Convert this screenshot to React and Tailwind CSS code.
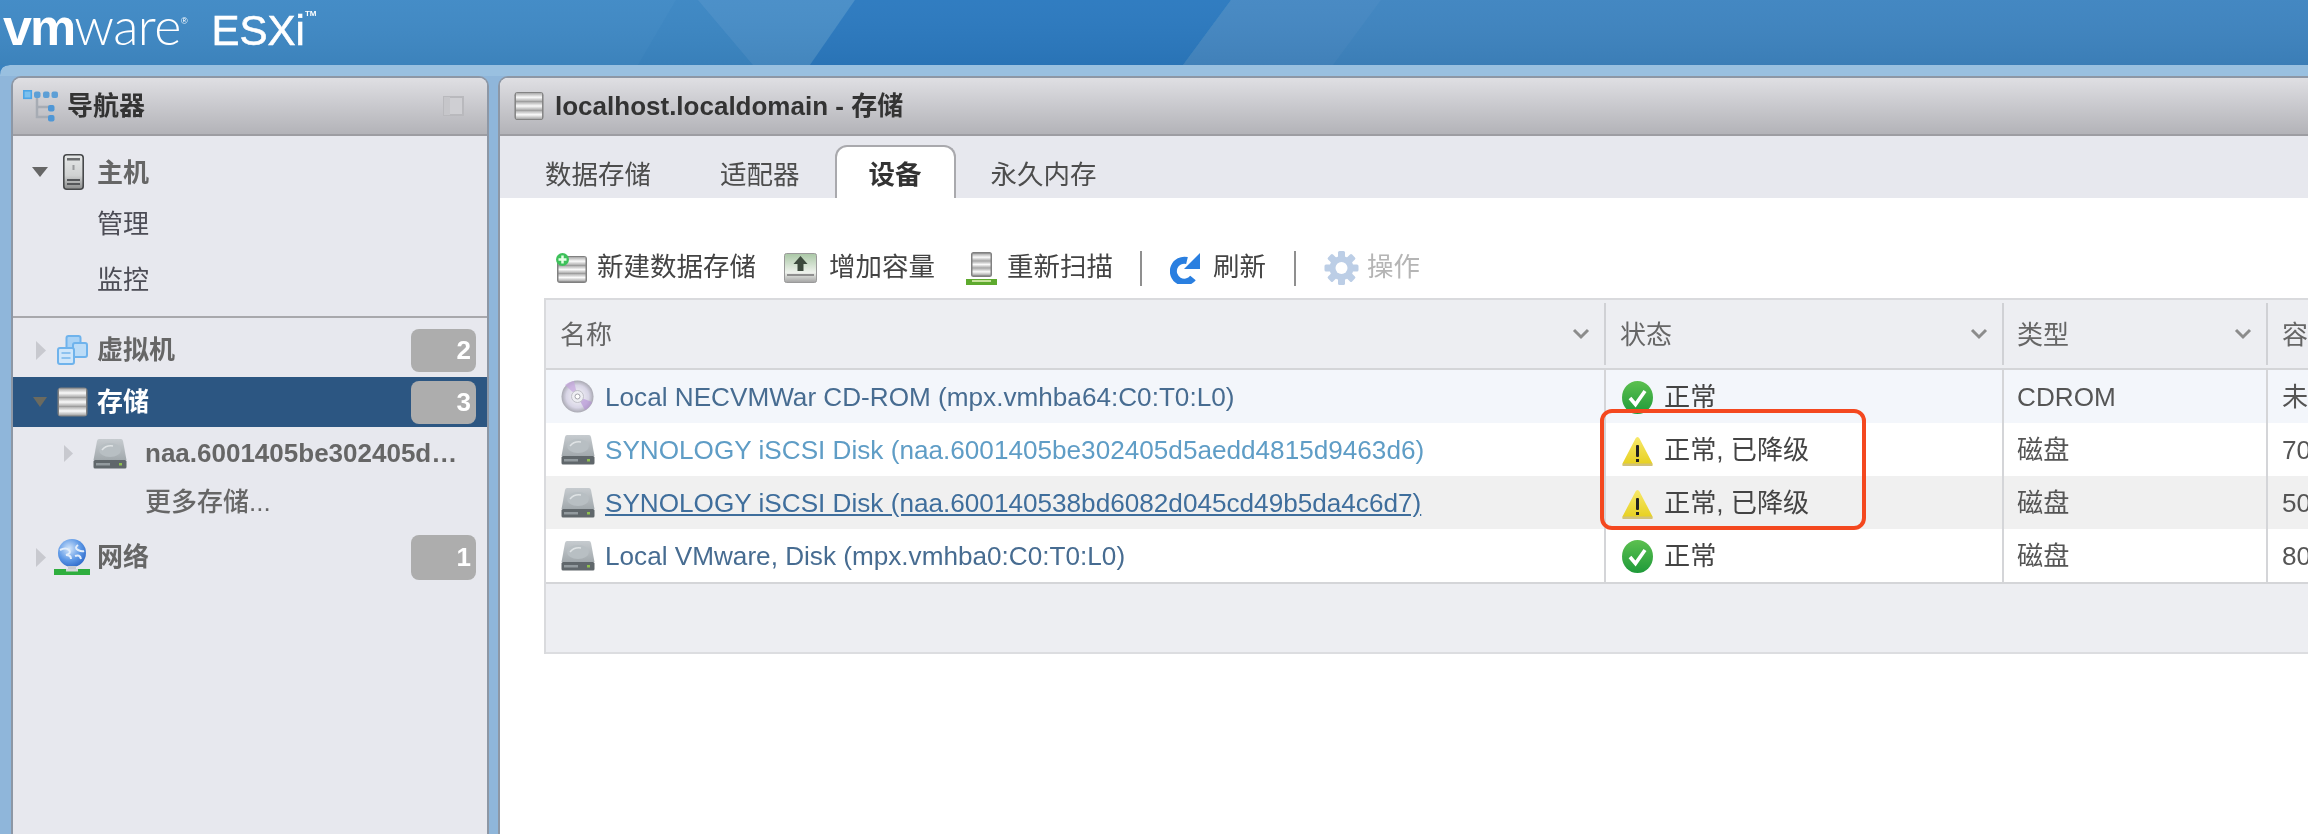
import React from "react";

const Defs = () => (
  <svg width="0" height="0" className="absolute">
    <defs>
      <linearGradient id="band" x1="0" y1="0" x2="0" y2="1">
        <stop offset="0" stopColor="#a8a8a8" />
        <stop offset="0.5" stopColor="#fafafa" />
        <stop offset="1" stopColor="#a4a4a4" />
      </linearGradient>
      <linearGradient id="diskTop" x1="0" y1="0" x2="0" y2="1">
        <stop offset="0" stopColor="#c6cbcf" />
        <stop offset="1" stopColor="#a2a9ad" />
      </linearGradient>
      <linearGradient id="warn" x1="0" y1="0" x2="0" y2="1">
        <stop offset="0" stopColor="#f7e86a" />
        <stop offset="1" stopColor="#e6cf1c" />
      </linearGradient>
      <linearGradient id="ok" x1="0" y1="0" x2="0" y2="1">
        <stop offset="0" stopColor="#5cc04f" />
        <stop offset="1" stopColor="#1f9a3a" />
      </linearGradient>
      <linearGradient id="host" x1="0" y1="0" x2="0" y2="1">
        <stop offset="0" stopColor="#e6e8e8" />
        <stop offset="0.6" stopColor="#d0d2d2" />
        <stop offset="1" stopColor="#8b8c8c" />
      </linearGradient>
      <radialGradient id="globe" cx="0.4" cy="0.35" r="0.7">
        <stop offset="0" stopColor="#d5e7fb" />
        <stop offset="0.6" stopColor="#5b97e6" />
        <stop offset="1" stopColor="#2e68c8" />
      </radialGradient>
      <radialGradient id="cd" cx="0.5" cy="0.5" r="0.5">
        <stop offset="0" stopColor="#f8f8fa" />
        <stop offset="0.7" stopColor="#d8d5e6" />
        <stop offset="1" stopColor="#a9a9b2" />
      </radialGradient>
      <linearGradient id="grow" x1="0" y1="0" x2="0" y2="1">
        <stop offset="0" stopColor="#a9c7a5" />
        <stop offset="0.65" stopColor="#eef2ec" />
        <stop offset="1" stopColor="#a3a3a3" />
      </linearGradient>
    </defs>
  </svg>
);

const Stack = ({ className }) => (
  <svg viewBox="0 0 31 30" className={className}>
    <rect x="0.5" y="0.5" width="30" height="29" rx="3.500" fill="#808080" />
    <rect x="2" y="1.500" width="27" height="9" fill="url(#band)" />
    <rect x="2" y="10.500" width="27" height="9" fill="url(#band)" />
    <rect x="2" y="19.500" width="27" height="9" fill="url(#band)" />
  </svg>
);

const Disk = ({ className }) => (
  <svg viewBox="0 0 34 31" className={className}>
    <path d="M6 1h22q1.500 0 2 2l3.500 19H.5L4 3q.500-2 2-2z" fill="url(#diskTop)" />
    <ellipse cx="17" cy="12" rx="11" ry="7" fill="#b8bfc3" />
    <path d="M9 12q4-5 11-4" stroke="#dfe3e5" strokeWidth="1.500" fill="none" />
    <rect x="0.500" y="22" width="33" height="8.500" rx="1.500" fill="#60676b" />
    <rect x="3" y="25" width="14" height="2.500" fill="#929a9e" />
    <rect x="26" y="25" width="3" height="2.500" fill="#8fc04f" />
  </svg>
);

const HostIcon = () => (
  <svg viewBox="0 0 21 36" className="w-[21px] h-[36px] ml-[15px] mr-[13px]">
    <rect x="0.800" y="0.800" width="19.400" height="34.400" rx="3" fill="url(#host)" stroke="#46484a" strokeWidth="1.600" />
    <rect x="4" y="4" width="13" height="2.500" fill="#6b6d6f" />
    <rect x="9.500" y="11" width="2" height="5" fill="#9a9c9e" />
    <rect x="4" y="25" width="13" height="2" fill="#55575a" />
    <rect x="4" y="29" width="13" height="2" fill="#55575a" />
  </svg>
);

const VmIcon = () => (
  <svg viewBox="0 0 31 30" className="w-[31px] h-[30px] mr-[9px]">
    <rect x="9.500" y="1" width="14" height="14" rx="2" fill="#a9d2f5" stroke="#6fb3ec" strokeWidth="2" />
    <rect x="16" y="8" width="14" height="14" rx="2" fill="#bcdcf7" stroke="#6fb3ec" strokeWidth="2" />
    <rect x="1" y="13" width="16" height="16" rx="2" fill="#cfe6fa" stroke="#6fb3ec" strokeWidth="2" />
    <rect x="4.500" y="17" width="9" height="2" fill="#8dc2ef" />
    <rect x="4.500" y="22" width="9" height="2" fill="#8dc2ef" />
  </svg>
);

const TreeIcon = () => (
  <svg viewBox="0 0 35 32" className="w-[35px] h-[32px] mr-[9px]">
    <path d="M14 5v22h12M14 17h12" stroke="#a7acb4" strokeWidth="2.500" fill="none" />
    <rect x="0.800" y="0.800" width="7.500" height="7.500" fill="#7cc0ee" stroke="#4da5e6" strokeWidth="1.600" />
    <rect x="11" y="1.500" width="6.500" height="6.500" rx="2" fill="#5d9fd6" />
    <rect x="20" y="1.500" width="6.500" height="6.500" rx="2" fill="#5d9fd6" />
    <rect x="28.500" y="1.500" width="6.500" height="6.500" rx="2" fill="#5d9fd6" />
    <rect x="25" y="15" width="6.500" height="6.500" rx="2" fill="#4f97d6" />
    <rect x="25" y="25" width="6.500" height="6.500" rx="2" fill="#4f97d6" />
  </svg>
);

const Globe = () => (
  <svg viewBox="0 0 36 36" className="w-[36px] h-[36px] mr-[7px]">
    <circle cx="18" cy="14" r="14" fill="url(#globe)" />
    <path d="M6 11q6-3 9 0t-3 5q5 0 5 4M24 6q-4 3 0 5t6 1M21 17q5-2 6 3" stroke="#e3eefb" strokeWidth="2" fill="none" />
    <rect x="14" y="27" width="8" height="4" fill="#c8ccd2" />
    <rect x="0" y="30" width="36" height="6" fill="#2fae3e" />
    <rect x="12" y="30" width="12" height="2.500" fill="#d4d7da" />
  </svg>
);

const Cd = () => (
  <svg viewBox="0 0 33 33" className="w-[33px] h-[33px]">
    <circle cx="16.500" cy="16.500" r="16" fill="url(#cd)" />
    <path d="M16.500 16.500L4 5A16 16 0 0 1 13 1z" fill="#c6a6de" opacity="0.7" />
    <path d="M16.500 16.500L31 22A16 16 0 0 1 24 30z" fill="#b592d6" opacity="0.65" />
    <circle cx="16.500" cy="16.500" r="6" fill="#eeeef3" stroke="#c0c0c8" />
    <circle cx="16.500" cy="16.500" r="2.500" fill="#ffffff" stroke="#a3a3ab" />
  </svg>
);

const Check = () => (
  <svg viewBox="0 0 31 33" className="w-[31px] h-[33px]">
    <ellipse cx="15.500" cy="16.500" rx="15.500" ry="16.500" fill="url(#ok)" />
    <path d="M8 17l5.500 6.500L23 10" stroke="#ffffff" strokeWidth="3.600" fill="none" />
  </svg>
);

const Warn = () => (
  <svg viewBox="0 0 31 30" className="w-[31px] h-[30px]">
    <path d="M15.500 1q1.300 0 2 1.500l13 25q.500 1.500-1 2.500H1.500q-1.500-1-1-2.500l13-25q.700-1.500 2-1.500z" fill="url(#warn)" />
    <path d="M1 27.500h29l.500 2.500H.500z" fill="#d2c27a" />
    <rect x="14" y="9" width="3" height="12" rx="1" fill="#222222" />
    <rect x="14" y="23" width="3" height="3" fill="#222222" />
  </svg>
);

const Chevron = () => (
  <svg viewBox="0 0 18 12" className="w-[18px] h-[12px]">
    <path d="M2 2l7 7 7-7" stroke="#8c8c8c" strokeWidth="3" fill="none" />
  </svg>
);

const TriRight = ({ className }) => (
  <svg viewBox="0 0 10 19" className={className}>
    <path d="M0 0l10 9.500L0 19z" fill="#c8c9cf" />
  </svg>
);

const Gear = () => {
  const teeth = [0, 45, 90, 135, 180, 225, 270, 315];
  return (
    <svg viewBox="0 0 35 34" className="w-[35px] h-[34px] mr-[8px]">
      {teeth.map((a) => (
        <rect key={a} x="14" y="0" width="7" height="8" rx="1.500" fill="#bccee6" transform={`rotate(${a} 17.500 17)`} />
      ))}
      <circle cx="17.500" cy="17" r="12" fill="#bccee6" />
      <circle cx="17.500" cy="17" r="6" fill="#ffffff" />
    </svg>
  );
};

const Badge = ({ n, tall }) => (
  <span className={`ml-auto mr-[11px] flex w-[65px] items-center justify-end rounded-lg bg-[#adadad] pr-[5px] text-[26px] font-bold text-white ${tall ? "h-[45px]" : "h-[43px]"}`}>
    {n}
  </span>
);

const Row = ({ bg, icon, name, nameClass, status, warn, type, cap }) => (
  <div className={`grid h-[53px] grid-cols-[1058px_398px_264px_1fr] text-[26.150px] ${bg}`}>
    <div className="flex items-center overflow-hidden pl-[15px]">
      <span className="flex w-[44px] shrink-0">{icon}</span>
      <span className={`whitespace-nowrap pt-[3px] ${nameClass}`}>{name}</span>
    </div>
    <div className="flex items-center border-l-2 border-[#d4d5d8] pl-[16px] text-[#444444]">
      <span className="flex w-[42px] shrink-0 pt-[2px]">{warn ? <Warn /> : <Check />}</span>
      <span className="whitespace-nowrap pt-[3px]">{status}</span>
    </div>
    <div className="flex items-center border-l-2 border-[#d4d5d8] pl-[13px] pt-[3px] text-[#555555]">{type}</div>
    <div className="flex items-center overflow-hidden border-l-2 border-[#d4d5d8] pl-[14px] pt-[3px] text-[#555555]">
      <span className="whitespace-nowrap">{cap}</span>
    </div>
  </div>
);

const Head = ({ label, pl, last = false, first = false }) => (
  <div className={`flex items-center overflow-hidden ${first ? "" : "my-[3px] border-l-2 border-[#d0d1d5]"} ${pl}`}>
    <span className="whitespace-nowrap pt-[2px] text-[26px] text-[#666666]">{label}</span>
    {!last && (
      <span className="ml-auto mr-[14px] flex">
        <Chevron />
      </span>
    )}
  </div>
);

export default function App() {
  return (
    <div className="relative flex h-[834px] w-[2308px] flex-col overflow-hidden bg-[#8fb6da] font-['Liberation_Sans','Noto_Sans_CJK_SC',sans-serif] blur-[0.5px]">
      <Defs />
      <svg viewBox="0 0 2308 76" className="absolute left-0 top-0 h-[76px] w-[2308px]">
        <defs>
          <linearGradient id="hdr" x1="0" y1="0" x2="0" y2="1">
            <stop offset="0" stopColor="#ffffff" stopOpacity="0.03" />
            <stop offset="1" stopColor="#000000" stopOpacity="0.05" />
          </linearGradient>
        </defs>
        <rect width="2308" height="76" fill="#3f89c5" />
        <path d="M676 0h22l55 65h-115z" fill="#3b86c3" />
        <path d="M698 0h157l-45 65h-57z" fill="#478dc7" />
        <path d="M855 0h376l-48 65H810z" fill="#2b79bf" />
        <path d="M1231 0h1077v65H1183z" fill="#3e84c0" />
        <path d="M1231 0h150l-48 65h-150z" fill="#ffffff" opacity="0.03" />
        <rect width="2308" height="65" fill="url(#hdr)" />
        <path d="M0 76V75Q0 65 10 65H2308V76z" fill="#ffffff" opacity="0.47" />
        <path d="M0 65h10Q0 65 0 75z" fill="#3a82bf" />
      </svg>
      <div className="relative flex h-[65px] shrink-0 items-baseline pl-[3px] text-white">
        <span className="text-[52px] font-bold leading-[50px] tracking-[-2px]">vm</span>
        <span className="font-['Lato','Liberation_Sans',sans-serif] text-[52px] font-light leading-[50px] tracking-[-0.5px]">ware</span>
        <span className="mb-[22px] self-center text-[9px]">®</span>
        <span className="ml-[24px] text-[42px] leading-[50px] [-webkit-text-stroke:0.6px_white]">ESXi</span>
        <span className="self-start pt-[8px] text-[8px] font-bold">TM</span>
      </div>

      <div className="relative flex min-h-0 flex-1 gap-[9px] pl-[11px] pt-[11px]">
        <aside className="flex w-[478px] shrink-0 flex-col overflow-hidden rounded-t-[10px] border-x-2 border-t-2 border-[#8d97a5] bg-[#e7e8ee]">
          <div className="flex h-[58px] shrink-0 items-center border-b-2 border-[#9d9da2] bg-gradient-to-b from-[#dfdfe3] to-[#b3b3b8] pl-[10px]">
            <TreeIcon />
            <span className="text-[26px] font-bold text-[#333333]">导航器</span>
            <svg viewBox="0 0 21 20" className="ml-auto mr-[23px] h-[20px] w-[21px]">
              <rect x="1" y="1" width="19" height="18" fill="#cfcfd3" stroke="#b9b9bd" strokeWidth="2" />
              <rect x="1" y="1" width="6" height="18" fill="#c6c6ca" />
            </svg>
          </div>

          <div className="flex h-[72px] shrink-0 items-center pl-[19px]">
            <svg viewBox="0 0 16 10" className="h-[10px] w-[16px]">
              <path d="M0 0h16L8 10z" fill="#666666" />
            </svg>
            <HostIcon />
            <span className="pt-[2px] text-[26px] font-bold text-[#666666]">主机</span>
          </div>
          <div className="flex h-[30px] shrink-0 items-center pl-[84px] pt-[2px] text-[26px] text-[#4c4c55]">管理</div>
          <div className="mt-[16px] flex h-[50px] shrink-0 items-center pl-[84px] pt-[2px] text-[26px] text-[#4c4c55]">监控</div>
          <div className="mt-[12px] h-[2px] shrink-0 bg-[#a8a8ac]" />

          <div className="flex h-[59px] shrink-0 items-center pl-[23px] pt-[5px]">
            <TriRight className="mr-[11px] h-[19px] w-[10px]" />
            <VmIcon />
            <span className="pt-[1px] text-[26px] font-bold text-[#666666]">虚拟机</span>
            <Badge n="2" />
          </div>
          <div className="flex h-[50px] shrink-0 items-center bg-[#2c5682] pl-[20px]">
            <svg viewBox="0 0 14 10" className="mr-[10px] h-[10px] w-[14px]">
              <path d="M0 0h14L7 10z" fill="#6b6a5f" />
            </svg>
            <Stack className="mr-[9px] h-[30px] w-[31px]" />
            <span className="text-[26px] font-bold text-white">存储</span>
            <Badge n="3" />
          </div>
          <div className="flex h-[53px] shrink-0 items-center pl-[51px]">
            <TriRight className="mr-[20px] h-[19px] w-[9px]" />
            <Disk className="mr-[18px] h-[31px] w-[34px]" />
            <span className="whitespace-nowrap text-[26px] font-bold text-[#666666]">naa.6001405be302405d…</span>
          </div>
          <div className="flex h-[44px] shrink-0 items-center pl-[132px] text-[26px] font-medium text-[#666666]">更多存储...</div>
          <div className="flex h-[66px] shrink-0 items-center pl-[23px]">
            <TriRight className="mr-[8px] h-[19px] w-[10px]" />
            <Globe />
            <span className="text-[26px] font-bold text-[#666666]">网络</span>
            <Badge n="1" tall />
          </div>
        </aside>

        <main className="flex min-w-0 flex-1 flex-col overflow-hidden rounded-tl-[10px] border-l-2 border-t-2 border-[#8d97a5] bg-white">
          <div className="flex h-[58px] shrink-0 items-center border-b-2 border-[#9d9da2] bg-gradient-to-b from-[#dfdfe3] to-[#b3b3b8] pl-[14px]">
            <Stack className="mr-[11px] h-[30px] w-[30px]" />
            <span className="text-[26px] font-bold text-[#333333]">localhost.localdomain - 存储</span>
          </div>
          <div className="flex h-[62px] shrink-0 items-end gap-[1px] bg-[#e7e8ee] pl-[11px] text-[26.500px] text-[#4d4d4d]">
            <div className="flex h-[53px] items-center px-[34px] pt-[8px]">数据存储</div>
            <div className="flex h-[53px] items-center px-[34px] pt-[8px]">适配器</div>
            <div className="flex h-[53px] items-center rounded-t-[12px] border-x-2 border-t-2 border-[#a9a9ad] bg-white px-[32px] pt-[6px] font-bold text-[#333333]">设备</div>
            <div className="flex h-[53px] items-center px-[34px] pt-[8px]">永久内存</div>
          </div>

          <div className="mt-[52px] flex h-[36px] shrink-0 items-center pl-[56px] text-[26.500px] text-[#444444]">
            <svg viewBox="0 0 31 30" className="mr-[10px] h-[30px] w-[31px]">
              <rect x="1" y="3" width="30" height="27" rx="3" fill="#808080" />
              <rect x="2.500" y="4" width="27" height="8.500" fill="url(#band)" />
              <rect x="2.500" y="12.500" width="27" height="8" fill="url(#band)" />
              <rect x="2.500" y="20.500" width="27" height="8" fill="url(#band)" />
              <circle cx="6.500" cy="6.500" r="6.500" fill="#3dc15a" />
              <path d="M6.500 2.500v8M2.500 6.500h8" stroke="#e6ffe6" strokeWidth="2.500" />
            </svg>
            <span className="mr-[28px]">新建数据存储</span>
            <svg viewBox="0 0 33 30" className="mr-[12px] h-[30px] w-[33px]">
              <rect x="0.500" y="0.500" width="32" height="29" rx="2" fill="url(#grow)" stroke="#9a9a9a" />
              <path d="M16.500 3l7 8h-4v7h-6v-7h-4z" fill="#3d4a3d" />
              <rect x="3" y="21" width="27" height="2" fill="#8f8f8f" />
            </svg>
            <span className="mr-[31px]">增加容量</span>
            <svg viewBox="0 0 31 33" className="mr-[10px] h-[33px] w-[31px]">
              <rect x="5" y="0" width="21" height="25" rx="2.500" fill="#808080" />
              <rect x="6.500" y="1.500" width="18" height="7.500" fill="url(#band)" />
              <rect x="6.500" y="9" width="18" height="7" fill="url(#band)" />
              <rect x="6.500" y="16" width="18" height="7.500" fill="url(#band)" />
              <rect x="0" y="27" width="31" height="6" fill="#5eaa2e" />
              <rect x="6" y="28" width="19" height="2" fill="#c5e29a" />
            </svg>
            <span>重新扫描</span>
            <span className="ml-[27px] mr-[28px] h-[35px] w-[2px] bg-[#8f8f8f]" />
            <svg viewBox="0 0 31 32" className="mr-[12px] h-[32px] w-[31px]">
              <path d="M23 26A11 11 0 1 1 17 8.500" stroke="#2a7fe0" strokeWidth="7" fill="none" />
              <path d="M30 1V17H14z" fill="#2a7fe0" />
            </svg>
            <span>刷新</span>
            <span className="ml-[28px] mr-[28px] h-[35px] w-[2px] bg-[#8f8f8f]" />
            <Gear />
            <span className="text-[#b5b5b5]">操作</span>
          </div>

          <div className="relative ml-[44px] mt-[12px] flex shrink-0 flex-col border-l-2 border-t-2 border-[#d9dadd] bg-[#edeef2]">
            <div className="grid h-[70px] grid-cols-[1058px_398px_264px_1fr] border-b-2 border-[#d4d5d8]">
              <Head label="名称" pl="pl-[14px]" first />
              <Head label="状态" pl="pl-[14px]" />
              <Head label="类型" pl="pl-[13px]" />
              <Head label="容量" pl="pl-[14px]" last />
            </div>
            <Row bg="bg-[#f3f6fb]" icon={<Cd />} name="Local NECVMWar CD-ROM (mpx.vmhba64:C0:T0:L0)" nameClass="text-[#476c91]" status="正常" type="CDROM" cap="未知" />
            <Row bg="bg-white" icon={<Disk className="h-[31px] w-[34px]" />} name="SYNOLOGY iSCSI Disk (naa.6001405be302405d5aedd4815d9463d6)" nameClass="text-[#5f9dc6]" status="正常, 已降级" warn type="磁盘" cap="70 GB" />
            <Row bg="bg-[#f0f0f0]" icon={<Disk className="h-[31px] w-[34px]" />} name="SYNOLOGY iSCSI Disk (naa.600140538bd6082d045cd49b5da4c6d7)" nameClass="text-[#3f6e9c] underline" status="正常, 已降级" warn type="磁盘" cap="50 GB" />
            <Row bg="bg-white" icon={<Disk className="h-[31px] w-[34px]" />} name="Local VMware, Disk (mpx.vmhba0:C0:T0:L0)" nameClass="text-[#476c91]" status="正常" type="磁盘" cap="80 GB" />
            <div className="h-[72px] border-y-2 border-t-[#d4d5d8] border-b-[#dcdde0] bg-[#edeef2]" />
            <div className="absolute left-[1054px] top-[109px] h-[121px] w-[266px] rounded-[12px] border-[4px] border-[#f4481f]" />
          </div>
        </main>
      </div>
    </div>
  );
}
